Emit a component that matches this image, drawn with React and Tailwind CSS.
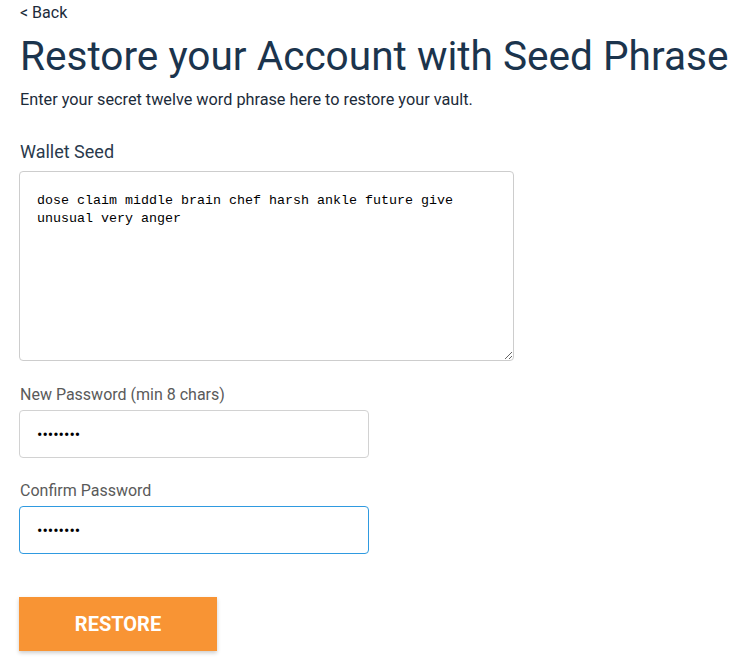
export default function App() {
  return (
    <div className="min-h-screen bg-white font-['Roboto',sans-serif] px-[20px]">
      <a href="#" className="block pt-[3px] text-[16px] leading-[20px] text-[#1c2b3a]">
        &lt; Back
      </a>
      <h1 className="mt-[9px] whitespace-nowrap text-[40.6px] leading-[48px] font-normal text-[#1b344d]">
        Restore your Account with Seed Phrase
      </h1>
      <p className="mt-[10px] text-[16.25px] leading-[20px] text-[#1c2b3a]">
        Enter your secret twelve word phrase here to restore your vault.
      </p>

      <div className="mt-[31px] w-[495px]">
        <label className="block text-[18px] leading-[22px] text-[#2a3a4c]">Wallet Seed</label>
        <textarea
          defaultValue="dose claim middle brain chef harsh ankle future give unusual very anger"
          className="mt-[8px] -ml-px block h-[190px] w-[495px] rounded-[4px] border border-[#cdcdcd] px-[17px] pt-[20px] font-['Liberation_Mono',monospace] text-[13.33px] leading-[18px] text-black outline-none"
        />
      </div>

      <div className="mt-[24px]">
        <label className="block text-[16px] leading-[20px] text-[#5a5a5a]">New Password (min 8 chars)</label>
        <input
          type="password"
          defaultValue="password"
          className="mt-[5px] -ml-px block h-[48px] w-[350px] rounded-[4px] border border-[#d2d2d2] px-[17px] text-[16px] text-black outline-none"
        />
      </div>

      <div className="mt-[23px]">
        <label className="block text-[16px] leading-[20px] text-[#5a5a5a]">Confirm Password</label>
        <input
          type="password"
          defaultValue="password"
          className="mt-[5px] -ml-px block h-[48px] w-[350px] rounded-[4px] border border-[#2f9ae0] px-[17px] text-[16px] text-black outline-none"
        />
      </div>

      <button className="mt-[43px] -ml-px flex h-[54px] w-[198px] items-center justify-center bg-[#f89434] text-[20px] font-bold text-white shadow-[0_2px_4px_rgba(0,0,0,0.2)]">
        RESTORE
      </button>
    </div>
  );
}
